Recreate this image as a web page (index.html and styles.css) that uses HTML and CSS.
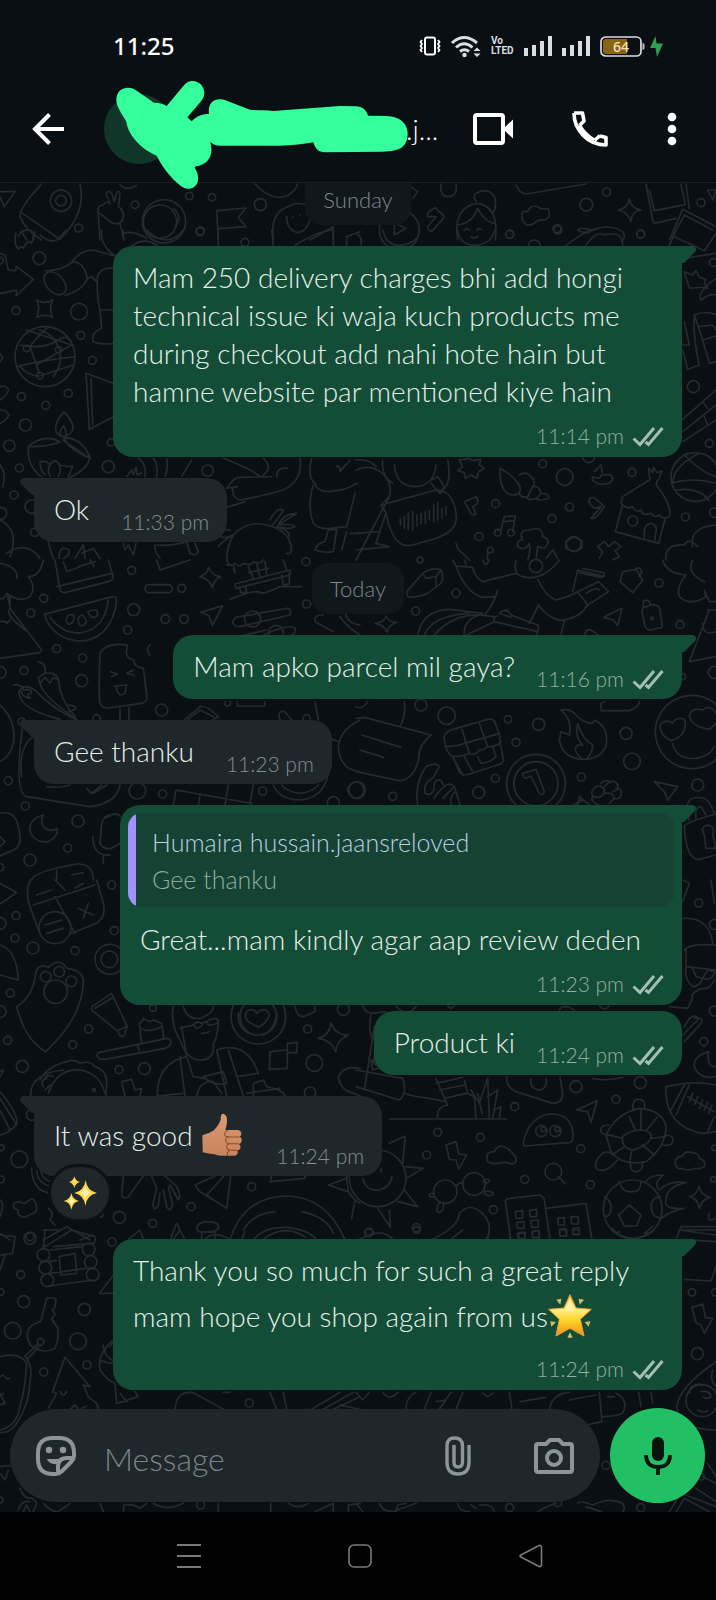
FILE: index.html
```html
<!DOCTYPE html>
<html lang="en">
<head>
<meta charset="utf-8">
<meta name="viewport" content="width=device-width, initial-scale=1">
<title>Chat</title>
<link rel="stylesheet" href="styles.css">
</head>
<body>
<svg class="defs" aria-hidden="true">
  <symbol id="ticks" viewBox="0 0 32 21"><path d="M1.500 12.500L8 18.500L22 2M13.500 16L16.500 18.500L30.500 2" fill="none" stroke="currentColor" stroke-width="3"/></symbol>
  <symbol id="signal" viewBox="0 0 28 20"><path d="M0 12h4v8H0zM8 9h4v11H8zM16 5h4v15h-4zM24 0h4v20h-4z" fill="#dcdde0"/></symbol>
</svg>

<header class="top">
  <div class="status">
    <span class="clock">11:25</span>
    <div class="status-icons">
      <svg width="22" height="20" viewBox="0 0 22 20" fill="none" stroke="#fff"><rect x="6" y="1.500" width="10" height="17" rx="2" stroke-width="2"/><path d="M3 4l-1.500 2L3 8l-1.500 2L3 12l-1.500 2L3 16M19 4l1.500 2L19 8l1.500 2-1.500 2 1.500 2-1.500 2" stroke-width="1.800"/></svg>
      <svg width="30" height="23" viewBox="0 0 30 23"><path d="M1 8Q13 -3 26 8M5 12.500Q13 5 21.500 12.500M9 16.500Q13.500 13 18 16.500" fill="none" stroke="#dcdde0" stroke-width="3"/><circle cx="13.500" cy="20" r="2.200" fill="#dcdde0"/><path d="M22.500 16l3.500-3.500 3.500 3.500zM22.500 18.500h7L26 22z" fill="#dcdde0"/></svg>
      <span class="volte"><span>Vo</span><span>LTED</span></span>
      <svg width="28" height="20"><use href="#signal"/></svg>
      <svg width="28" height="20"><use href="#signal"/></svg>
      <span class="power">
        <svg width="45" height="21" viewBox="0 0 45 21"><rect x="1" y="1" width="40" height="19" rx="4.500" fill="none" stroke="#dcdde0" stroke-width="1.700"/><path d="M6 3h21v15H6q-3 0-3-3V6q0-3 3-3z" fill="#8a6511"/><path d="M42.500 7q2 0 2 2v3q0 2-2 2z" fill="#b9bbbe"/><text class="charge" x="21" y="15.500" text-anchor="middle">64</text></svg>
        <svg width="13" height="21" viewBox="0 0 13 21"><path d="M5.500 0L0 12h5.500L7 21L13 7.500H6.500z" fill="#2e9e4f"/></svg>
      </span>
    </div>
  </div>
  <div class="appbar">
    <button class="icon-btn" aria-label="Back"><svg width="32" height="32" viewBox="0 0 32 32" fill="none" stroke="#fff" stroke-width="4"><path d="M32 16H3M17.500 1.500L3 16l14.500 14.500"/></svg></button>
    <span class="avatar"></span>
    <h1 class="contact">.j...</h1>
    <div class="actions">
      <button class="icon-btn" aria-label="Video call"><svg width="40" height="32" viewBox="0 0 40 32"><rect x="2" y="2" width="28" height="28" rx="2" fill="none" stroke="#fff" stroke-width="4"/><path d="M30 16L40 6.500V25.500z" fill="#fff"/></svg></button>
      <button class="icon-btn" aria-label="Voice call"><svg width="36" height="36" viewBox="0 0 36 36" fill="none" stroke="#fff" stroke-width="3.600" stroke-linejoin="round"><path d="M2 2h8.500l1.500 8-4.500 4.500M28 25l6 1.500V34C16 34 2 19 2 2M28 24.500l-5.500 5"/><path d="M7.500 14.500Q13 24 22 29"/></svg></button>
      <button class="icon-btn" aria-label="More options"><svg width="10" height="34" viewBox="0 0 10 34" fill="#fff"><circle cx="5" cy="5" r="4.300"/><circle cx="5" cy="17" r="4.300"/><circle cx="5" cy="29" r="4.300"/></svg></button>
    </div>
    <svg class="scribble" width="410" height="190" viewBox="0 0 1230 570" aria-hidden="true"><path fill="#34ff9c" d="M349 300C349 275 365 263 385 263C395 263 402 266 410 272L462 308C480 308 492 312 500 318L550 258C560 246 568 243 578 243C598 243 613 260 613 279C613 290 608 298 602 305L562 352L575 364C590 348 605 342 627 342C624 320 632 298 660 298C668 298 675 300 682 303L750 329C775 331 800 330 820 333L1020 318L1068 319C1090 320 1100 333 1104 347L1158 348C1205 349 1223 375 1223 400C1223 440 1200 455 1148 455L975 457C955 457 945 445 940 427C900 434 870 436 840 437H660C648 437 640 433 630 426C638 450 635 470 620 485C610 494 600 496 588 499L584 503C595 520 597 535 592 548C585 565 565 570 553 564C530 552 490 510 470 467C430 450 385 410 379 365C365 340 349 320 349 300Z"/></svg>
  </div>
</header>

<main class="chat">
  <svg class="wallpaper" viewBox="0 183 716 1329" preserveAspectRatio="xMidYMin slice" aria-hidden="true">
    <g transform="scale(.33333)">
      <path d="M0 575L45 575L12 620L0 590M125 552Q60 620 60 650Q75 690 125 720M60 635L180 718Q260 640 240 552M55 710Q60 690 85 690Q105 690 100 720M68 700L80 720M300 720L295 640Q290 615 310 615Q320 600 330 612L318 582Q325 568 335 580L343 605L350 578Q360 568 360 585L355 620Q375 630 368 660Q355 680 330 665L300 640M360 670L372 720M370 700Q400 690 440 715M520 625Q550 650 525 680M360 555Q380 575 410 556M655 720L650 632L738 624L715 652L738 680L656 686M820 720Q810 640 860 622Q900 600 925 620M860 650Q860 690 895 698Q925 690 930 655M878 650v2M900 645v2M765 552Q800 590 835 592Q880 590 892 552M930 720L1000 680V720"/>
      <circle cx="183" cy="602" r="32"/><circle cx="183" cy="602" r="16"/><circle cx="236" cy="684" r="12"/><circle cx="405" cy="614" r="11"/><circle cx="568" cy="588" r="11"/><circle cx="636" cy="592" r="11"/><circle cx="601" cy="693" r="12"/><circle cx="781" cy="614" r="18"/><circle cx="492" cy="664" r="65"/><circle cx="480" cy="665" r="50"/>
    </g>
    <g transform="translate(356 0) scale(.33333)">
      <path d="M165 560L185 575L170 595M255 552Q250 590 278 590Q305 588 300 552M225 630Q210 640 215 650L240 650L215 680Q215 695 230 692L262 655Q268 645 255 640L238 623ZM305 720Q290 620 365 610Q430 620 418 720M305 675Q350 670 365 625Q385 665 415 670M360 605Q350 585 360 580Q395 560 415 590Q425 620 410 640M325 690Q332 682 340 690M362 690Q370 682 378 690M500 660Q490 630 515 635Q525 610 548 622Q555 630 575 625Q590 650 565 660Q545 658 535 670Q510 685 500 660ZM480 555Q490 580 510 582L690 552M820 597Q825 625 855 630Q825 635 825 665Q815 635 787 630Q815 625 820 597M870 552L890 660Q892 672 905 668L960 655M880 570L895 632L988 614L975 552M990 552L1000 625M940 720L980 628L1080 680M955 700L985 645L1070 690M1055 570H1080L1070 600ZM115 670V705L150 685ZM665 690Q670 680 710 690Q760 670 800 695Q810 710 800 720M665 690Q690 705 710 692"/>
      <circle cx="691" cy="614" r="19"/><circle cx="752" cy="576" r="12"/><circle cx="603" cy="686" r="12"/><circle cx="461" cy="703" r="12"/><circle cx="854" cy="703" r="12"/><circle cx="1035" cy="608" r="12"/><circle cx="130" cy="690" r="60"/>
    </g>
    <g transform="translate(0 230) scale(.33333)">
      <path d="M48 10Q40 40 55 58Q65 45 70 55Q85 25 95 40L105 5M120 15Q150 40 170 30L200 0M305 0Q300 50 350 80M370 25V0M0 70L15 75L25 120L48 122V108L100 148L48 198L50 180L0 190M215 97Q240 60 280 60L345 78M215 97Q250 90 262 145L275 140L290 155M215 97Q190 120 135 123M262 145Q250 180 195 197M110 210Q135 225 158 210Q145 240 158 262Q135 250 110 262Q122 235 110 210M345 115Q300 110 292 140Q290 200 300 240L305 295Q270 310 280 335Q300 345 345 340M300 240H345M0 470Q20 465 26 480Q25 490 0 510M0 540Q22 540 26 555Q22 570 0 580M258 430L345 462M258 430L268 598L345 558M273 445L278 585M0 370L8 385L0 395M192 545Q215 570 220 590Q215 618 190 620Q165 615 167 590Q170 570 192 545M190 588Q175 605 183 618M190 588Q202 605 198 618M85 650Q130 610 180 635Q150 650 85 650M85 650Q80 710 125 740M192 625Q210 660 270 685Q260 720 210 742M188 630L270 685M192 623Q250 625 270 685M120 695Q140 690 150 705Q165 680 178 705Q200 710 218 710L205 740M120 695Q120 720 135 735M150 705Q140 720 150 738M178 705Q185 725 175 738M0 705Q20 730 8 770M50 290M60 345Q130 360 175 330Q200 310 215 340M50 410Q130 390 225 380M88 350Q140 290 150 290M90 350L118 430M118 300Q160 310 178 358Q190 400 160 440M60 410Q90 440 118 438L220 405M80 300L215 345M108 405L215 345M380 740L395 720L400 735L408 712L412 735L425 728M415 685Q440 700 435 740M460 685Q475 700 470 740M500 685Q505 720 495 740M545 740L575 690M670 685Q760 720 780 740M790 685Q820 710 790 735M830 740Q830 710 862 715M900 685Q910 750 850 780Q780 800 720 810M720 810Q695 800 700 785Q690 775 712 770L680 775Q700 745 715 742L815 740M680 832L735 815M835 885Q850 850 890 850L835 885Q880 880 885 890Q870 900 830 890Q870 900 868 920M815 888Q840 860 850 840Q830 830 810 870M680 990Q680 950 700 915Q740 870 800 885Q870 900 875 960Q870 975 860 970M700 915Q670 930 655 950M690 900Q660 895 655 915Q670 930 700 915M935 685Q920 740 945 760Q950 785 990 785Q1040 780 1070 760M940 765Q920 830 940 880Q960 900 990 895L1040 890L1065 790M985 900L1010 898L1000 965Q970 970 945 960Q950 940 975 935ZM1040 905L1025 960M1050 910H1080M1010 710Q1020 700 1020 725L1050 690M0 870Q60 900 30 980M20 970Q80 930 120 985M145 935Q150 960 160 985M370 940L375 960L385 945L400 975L408 940M465 945Q460 960 480 985M470 945Q510 950 560 935L570 970Q590 980 595 965L585 940"/>
      <circle cx="118" cy="85" r="19"/><circle cx="48" cy="242" r="12"/><circle cx="237" cy="245" r="25"/><circle cx="242" cy="316" r="12"/><circle cx="277" cy="391" r="12"/><circle cx="135" cy="380" r="90"/><circle cx="80" cy="355" r="10"/><circle cx="176" cy="359" r="10"/><circle cx="120" cy="437" r="10"/><circle cx="64" cy="500" r="12"/><circle cx="205" cy="490" r="12"/><circle cx="137" cy="526" r="12"/><circle cx="76" cy="585" r="18"/><circle cx="28" cy="647" r="17"/><circle cx="58" cy="714" r="12"/><circle cx="325" cy="710" r="18"/><circle cx="333" cy="637" r="11"/><circle cx="42" cy="795" r="12"/><circle cx="2" cy="850" r="18"/><circle cx="95" cy="830" r="20"/><circle cx="104" cy="907" r="12"/><circle cx="623" cy="722" r="17"/><circle cx="600" cy="5" r="12"/><circle cx="735" cy="37" r="12"/><circle cx="0" cy="92" r="10"/><ellipse cx="165" cy="160" rx="40" ry="26" transform="rotate(48 165 160)"/>
      <path d="M395 48Q430 20 470 45M440 0Q500 60 550 0M655 0V46M815 0L820 46M885 46Q960 0 1000 0V46M1040 46V20L1080 5M178 985Q175 960 190 955Q215 955 205 975L190 985M225 985L250 945L255 985M245 970L280 955L300 985"/>
    </g>
    <g transform="translate(356 230) scale(.33333)">
      <path d="M0 10Q20 20 15 45M80 0Q90 46 130 46Q190 40 190 0M305 0Q310 46 360 46Q410 40 415 0M345 20Q355 30 365 18M630 46Q680 10 700 0M690 46Q720 0 745 15Q800 0 800 46M940 46L960 0M955 20L1045 62L1080 10M985 85L1080 70M985 125L1000 175Q1040 170 1055 175Q1040 160 1050 148L1030 142L1020 122L1010 135ZM1035 210Q1020 190 1080 145M1035 210Q1060 190 1080 195M985 275L1000 345L980 345M1015 255Q1050 240 1080 255M1015 255L1040 330L1080 318M980 360L995 418L1030 405Q1010 320 1015 255M1040 330L1060 400L1080 395M1025 290L1070 285L1080 300M980 568L1080 480M980 605L1080 525M980 635L1080 570M1040 515L1055 535M1045 560L1055 585M115 705Q120 770 180 770Q235 765 240 705M80 690Q75 740 110 760M275 690Q290 770 250 785M225 760L250 790Q265 785 262 765L245 740M225 750L245 740M0 720Q40 700 80 730Q110 760 100 800L0 990M100 800L75 825L90 848Q110 960 170 945L240 925Q310 900 300 850Q290 780 240 780L75 825M90 848L60 940L100 950L0 960M0 910L65 905M133 865V885M145 860V895M157 850V900M170 845V902M183 855V888M195 850V882M208 845V880M220 840V870M233 825V875M245 818V870M258 835V865M270 830V855M310 690L320 710L305 722L325 728L328 745L345 735L362 745L368 725L385 715L370 705L375 688L350 692L340 685ZM432 715Q430 790 470 795Q500 795 490 765Q470 735 432 715ZM490 735Q510 720 530 745Q540 760 530 770Q550 765 555 790Q580 790 578 805Q550 815 540 805Q520 815 510 800Q495 805 490 790M530 770L515 800M555 790L540 808M325 815L360 800Q375 820 350 830L360 850Q350 860 345 850ZM415 910Q415 895 435 900L445 860L478 858L470 905M440 875L475 872M735 705L740 735Q770 730 770 745Q770 765 730 762Q705 755 710 740Q735 750 735 735M715 725L735 705M800 800L880 750Q885 745 880 740L878 715L890 728L893 712L903 728L918 722L910 745Q895 760 905 770Q950 830 940 860Q920 870 910 855Q895 865 885 850Q860 860 855 840Q840 850 830 830Q810 840 795 820ZM798 830L778 905L908 940L928 865M865 925V900Q870 880 885 880Q905 885 900 905L895 935M700 820Q695 800 715 803L745 830Q720 870 705 865L735 830L715 835ZM485 950Q480 930 500 930Q485 900 520 900Q560 885 560 920Q590 930 565 955L545 950L540 985M485 950Q510 965 520 940Q525 965 515 990M570 985L590 960L605 985M655 920L678 932V955L655 965L630 955V932ZM725 950L745 935L758 950L775 935L795 950L778 962L790 980L770 990M725 950L740 965L730 985M930 990Q925 940 985 945Q1000 920 1025 950M1010 950Q1000 890 1080 885M1030 670Q950 710 950 760M985 675Q1040 730 1080 740M945 760Q1010 740 1080 760M960 780Q1030 770 1060 812M300 940Q305 960 320 970L340 990M395 990V955Q410 945 412 965L395 970M0 690Q40 685 60 710"/>
      <circle cx="461" cy="13" r="12"/><circle cx="854" cy="12" r="12"/><circle cx="605" cy="0" r="12"/><circle cx="535" cy="48" r="18"/><circle cx="1072" cy="98" r="12"/><circle cx="1012" cy="470" r="18"/><circle cx="1060" cy="640" r="12"/><circle cx="560" cy="701" r="12"/><circle cx="828" cy="727" r="12"/><circle cx="626" cy="741" r="25"/><circle cx="419" cy="821" r="12"/><circle cx="641" cy="831" r="12"/><circle cx="588" cy="866" r="12"/><circle cx="369" cy="920" r="12"/><circle cx="988" cy="861" r="12"/><circle cx="830" cy="873" r="15"/><circle cx="653" cy="942" r="22"/><circle cx="1018" cy="741" r="73"/><circle cx="1075" cy="848" r="14"/><circle cx="425" cy="908" r="10"/><circle cx="465" cy="908" r="10"/><circle cx="698" cy="680" r="18"/>
    </g>
    <g transform="translate(0 560) scale(.33333)">
      <path d="M165 0L180 90Q185 100 198 97L325 65Q342 60 338 45L325 0M170 80L335 40M190 5L200 35L240 20M235 20L285 5M270 0L282 18M130 0Q120 50 85 50Q110 80 90 110Q60 130 20 100Q10 120 0 115M50 55Q55 20 0 10M22 100L30 145L125 270L120 278L0 295M30 110V145Q20 160 40 180L75 210M0 185Q15 180 20 190L30 180M132 163L338 110Q355 105 345 150Q320 240 240 243Q160 240 132 163ZM150 172Q190 225 245 218Q315 205 325 120M200 185Q195 160 222 165Q225 190 205 193ZM240 195Q225 170 248 165Q270 190 245 198ZM265 160Q260 150 290 150Q300 175 275 172ZM470 0L480 30L570 0M600 50Q625 40 625 22Q640 50 662 50Q640 60 638 83Q625 55 600 50M680 15L700 15L705 40M680 0Q690 25 705 10Q720 25 730 10Q750 20 760 5Q780 15 790 0M705 72L870 30V45L708 85ZM718 80L722 98H740L736 78M845 45L850 75L868 72V40M745 20L760 55M770 10L780 52M795 5L800 48M745 38L805 25M850 0L860 30M690 118L740 100Q770 90 790 100Q820 90 840 80H905M602 157L668 137L637 197L627 167ZM300 280Q295 410 300 430Q305 445 325 444L425 430Q445 425 440 405L430 325Q400 320 402 300Q370 295 383 256Q320 245 300 280M332 335L352 342L335 350M400 330L380 340L402 345M342 378L382 375M350 378Q350 405 365 405Q380 400 378 378M360 445V480M387 442V480M115 305Q140 310 135 340M115 355Q130 335 155 340Q175 345 175 360L160 352L150 370L135 352L120 370ZM120 370Q130 410 230 478M175 360Q180 420 225 470M200 435Q230 435 225 448L205 455M40 375Q60 372 70 385M60 410Q50 385 80 380Q100 385 110 395Q150 440 225 478M60 410Q70 450 180 478M70 390Q95 385 95 400Q75 400 90 415Q65 410 65 395M0 435Q50 480 40 550Q30 590 0 605M70 480Q40 700 80 710L270 740Q350 730 360 675M100 530Q55 560 65 650M140 680Q180 685 210 675M260 685L275 700L305 675M280 700L320 675M555 478L600 440Q620 435 655 470L640 478M565 478L600 450L640 470M675 425V435Q690 445 692 425M712 425V438H795V425M840 480Q830 450 855 455L875 480M945 425L955 480M1080 480Q1020 510 1015 560Q1020 630 1080 635M985 535L1018 545M520 735L528 690L755 730L750 740M600 705L595 735M685 675L675 735M760 675L750 730M820 675Q840 720 900 720Q970 715 985 640M845 675Q860 695 900 700Q940 695 955 675M0 760Q45 750 55 800Q70 860 40 870L0 888M0 830L15 845L0 860M130 765Q80 780 92 820Q110 850 145 845Q175 830 172 805Q150 820 130 800Q120 785 130 765M315 770Q350 755 362 770M300 850L305 790Q310 770 330 768M300 850Q310 870 335 865L360 850M278 830Q280 890 330 885M310 888V910M95 960Q100 935 230 912Q280 910 280 960M170 930V960M215 945L250 938M1035 155Q1040 190 1080 195M945 185L1000 215M945 185Q940 165 970 165M1020 170Q1040 200 1080 225M720 170L860 145Q875 145 870 165L720 200Q695 200 700 180Q705 170 720 170M790 225Q870 190 885 205Q890 220 870 228M720 228L800 210M450 255Q435 265 450 285"/>
      <rect x="435" y="74" width="82" height="24" rx="12"/><circle cx="545" cy="85" r="12"/><circle cx="395" cy="31" r="12"/><circle cx="131" cy="115" r="12"/><circle cx="92" cy="159" r="12"/><circle cx="401" cy="149" r="18"/><circle cx="496" cy="177" r="13"/><circle cx="552" cy="177" r="13"/><circle cx="383" cy="210" r="12"/><circle cx="170" cy="266" r="12"/><circle cx="248" cy="294" r="12"/><circle cx="72" cy="332" r="12"/><circle cx="0" cy="337" r="18"/><circle cx="245" cy="362" r="18"/><circle cx="485" cy="450" r="18"/><circle cx="290" cy="475" r="11"/><circle cx="65" cy="485" r="11"/><circle cx="25" cy="662" r="12"/><circle cx="76" cy="738" r="12"/><circle cx="234" cy="783" r="18"/><circle cx="203" cy="864" r="12"/><circle cx="90" cy="900" r="18"/><circle cx="0" cy="922" r="11"/><circle cx="412" cy="692" r="25"/><circle cx="488" cy="702" r="12"/><circle cx="788" cy="693" r="12"/><circle cx="1000" cy="728" r="18"/><circle cx="1068" cy="690" r="24"/><circle cx="758" cy="177" r="24"/><circle cx="828" cy="218" r="22"/><circle cx="920" cy="132" r="12"/><circle cx="918" cy="5" r="12"/><circle cx="920" cy="475" r="11"/>
    </g>
    <g transform="translate(356 560) scale(.33333)">
      <path d="M290 0L300 18L350 22Q355 50 380 65L480 40M300 18Q330 100 380 112L415 110M325 0L330 15M380 0Q390 25 400 0M425 90Q415 130 388 162M480 0Q470 45 500 50Q560 65 610 0M545 58Q570 110 600 120Q640 110 665 95L728 65L758 95L695 135L665 95M620 180Q670 175 695 135M690 100Q720 80 730 90M665 30L745 50M680 25L742 38Q750 50 735 52L670 38M665 30L650 95M800 35L840 28L860 60L830 98L792 65ZM835 30Q850 15 858 35L848 50M743 172L798 145L785 197L772 180ZM860 145L890 133Q910 135 912 150L918 195Q920 205 905 205L885 210Q870 210 866 195L858 155ZM862 140V125Q865 115 880 125L883 135M152 95L200 40Q230 20 255 30Q265 50 255 70L215 100Q180 115 155 110ZM200 40L210 55L240 50L240 80M240 50L255 30M58 190Q88 185 90 168Q98 188 122 187Q98 195 93 217Q85 195 58 190M185 225Q200 150 280 148L380 160M205 225Q230 165 340 160M325 228Q320 180 370 165L415 170M235 225Q290 160 380 165M430 160Q450 140 465 165L545 195Q550 205 545 215L415 185Q410 170 425 168M430 160L465 172M445 150H455M415 185L325 228M545 215L540 228M520 190L548 135Q580 180 625 182L615 225M920 0Q930 40 990 45Q960 80 970 110Q1000 140 1050 110L1045 90M1010 0Q990 40 1045 65M1045 90L1060 125H1080M1055 150H1080M1060 150L1000 305L1080 290M1040 190Q1040 230 1080 215M685 228Q690 205 705 210L730 228M0 440Q20 450 35 425M145 425Q150 460 135 495M0 475L25 472L225 525Q185 560 190 590Q175 660 130 662L0 635M18 525L135 562M12 570L82 592M265 540Q260 520 285 510L395 478Q415 475 418 490L432 530Q430 550 435 560L442 600Q440 612 425 615L330 645Q315 645 310 635L290 590Q270 580 265 540ZM318 508L340 580Q320 590 290 590M370 490L395 560Q425 560 435 545M268 560Q300 560 325 550L432 520M340 580Q355 590 370 570Q385 570 395 560M295 600L320 645M325 590L350 635M365 590L375 610Q400 610 420 590L410 560M745 425L735 430V452H820Q850 440 850 425M615 450Q640 445 655 460Q680 490 710 490L715 480Q760 500 750 560Q730 600 680 598Q620 595 610 540L615 515L640 525Q650 480 615 450M680 598Q645 570 665 555L680 555Q655 530 665 490Q680 540 710 555Q710 580 690 598M985 510Q995 475 975 475Q955 475 950 490Q930 475 912 495Q910 525 945 542Q975 535 985 510M1080 460Q1060 430 1040 450Q1010 440 1000 465Q1005 500 1060 508L1080 490M950 550Q960 600 1020 595Q1060 590 1075 560M185 735Q175 670 210 620Q240 605 250 620L230 655M230 655Q200 670 208 700Q225 710 232 690M235 690Q230 655 255 660L265 680Q240 700 235 715M265 680Q280 665 295 680L260 715M295 680L300 695Q280 705 285 735M300 695L312 735M500 640L540 628L565 695Q560 710 550 700L525 648L508 655Q500 650 500 640M480 700Q460 650 500 620L515 608M895 665L965 680L935 720L925 695ZM670 715L665 735M650 735L680 720L670 710L700 735M710 690Q730 665 745 690Q745 710 725 712Q700 710 710 690M745 680Q770 650 785 675Q790 690 770 695M735 670Q750 655 765 668M745 700Q770 695 775 715L760 730M710 710Q700 725 730 735M780 685Q800 685 795 705Q790 720 775 715M1000 780Q975 700 1045 715Q1060 720 1075 760M1020 775Q1015 740 1035 740L1050 765M985 800Q980 790 1080 762M985 800Q990 900 1030 898L1080 885M1050 865L1045 825Q1030 800 1055 795Q1080 800 1070 825L1080 865Z"/>
      <circle cx="540" cy="18" r="20"/><circle cx="300" cy="99" r="12"/><circle cx="179" cy="153" r="12"/><circle cx="909" cy="69" r="12"/><circle cx="972" cy="194" r="12"/><circle cx="888" cy="175" r="4"/><circle cx="272" cy="467" r="26"/><circle cx="195" cy="435" r="18"/><circle cx="456" cy="478" r="11"/><circle cx="548" cy="493" r="18"/><circle cx="480" cy="547" r="12"/><circle cx="810" cy="520" r="18"/><circle cx="828" cy="604" r="25"/><circle cx="418" cy="655" r="12"/><circle cx="676" cy="651" r="12"/><circle cx="368" cy="697" r="18"/><circle cx="110" cy="709" r="12"/><circle cx="3" cy="690" r="25"/><circle cx="1025" cy="675" r="18"/><circle cx="540" cy="671" r="88"/><circle cx="540" cy="671" r="66"/><circle cx="1008" cy="516" r="110"/><circle cx="1075" cy="337" r="18"/><circle cx="980" cy="350" r="9"/><circle cx="192" cy="0" r="9"/>
    </g>
    <g transform="translate(0 880) scale(.33333)">
      <path d="M0 10L50 38L0 72M90 0Q75 40 90 80L115 150M215 160L290 130Q320 110 310 70L290 0M100 75L285 15M165 50L225 160M195 30L165 0M110 45L155 30M225 25L250 10M235 85L280 105M265 70L250 115M135 135L185 120M140 160L190 145M0 195Q50 210 55 300L0 285M50 380Q100 350 108 275Q115 250 145 262Q180 230 200 265Q245 270 250 300Q250 410 137 515Q75 480 50 380M275 380L335 340L382 440L375 455Q380 465 365 470Q355 465 355 455L275 390ZM285 385L340 352M355 450L380 440M290 525Q295 515 310 515L500 475Q515 475 512 490Q510 500 495 505L315 538Q295 540 290 525M412 495L418 512M425 490L418 430Q430 425 430 415Q450 430 460 420L485 430L492 475M425 445Q440 460 485 440M520 380Q510 430 540 480Q560 540 600 540Q635 540 640 510V490Q650 480 655 430M550 380Q560 420 600 415Q640 400 640 380M580 435Q590 420 605 430Q610 440 590 445ZM620 425Q640 410 655 420Q655 435 625 435ZM540 445L580 435M605 430L620 425M605 460Q620 460 628 455M472 648Q470 550 560 530L545 440M560 530L580 590L615 595M650 510L680 648M650 510Q740 480 775 580L710 590M685 510L730 648M540 530L555 648M475 648L550 640M610 590L670 575L680 610Q640 620 610 590M590 648Q600 600 640 605L665 640M760 648V610L790 600L800 620Q850 630 855 648M740 640L840 625M770 400Q760 380 740 395Q730 410 745 425L775 442Q800 430 808 405Q800 385 785 390Q775 392 770 400M715 400Q710 440 745 460M830 400Q825 450 790 465M885 380Q890 410 910 410L945 395V380M955 475Q990 465 993 428Q1005 465 1045 465Q1010 480 1007 515Q995 480 955 475M810 515L862 510V565L808 568ZM862 490L892 487L890 518H862ZM1080 565Q1030 555 1015 590Q1020 630 1060 640L1080 648M92 648Q90 580 190 570M120 600Q140 560 200 545Q220 535 240 550Q270 540 285 560Q320 570 320 610L318 648M145 640Q170 565 240 570Q300 580 315 640M130 600Q140 580 160 590M130 620Q120 600 140 595M135 630L150 615M365 605L395 598L405 630L425 625L420 648M365 605L375 648M0 575Q20 560 0 590M0 635Q55 700 50 730Q30 760 0 765M0 655L50 735M0 690L30 750M95 865Q95 930 150 940M110 870Q110 910 155 920M120 865Q125 900 155 905M55 965L75 970L95 955Q115 970 108 995L75 1012Q50 1010 55 990Q35 985 42 970ZM145 985Q165 1000 150 1020L165 1035M300 1010Q310 1015 308 1000M0 1010Q15 970 0 960M370 888L365 945Q370 960 385 950L430 888M455 888L470 925L458 975Q465 995 475 975L480 940M490 930L500 980Q510 1000 518 975L505 920M510 915L535 960Q545 945 530 920L495 888M645 888L585 915L600 935L680 985L692 888M670 890L620 945L640 960M815 888L810 905L915 895V888M985 915L1040 895L1045 935ZM1040 895V888M1055 1015L1065 960M1045 935Q1060 960 1080 970M985 915L1045 935M690 1080Q730 950 860 948Q980 950 1035 1080M760 1080Q790 1040 860 1042Q930 1050 950 1080M730 1050Q760 1000 825 995M905 995Q980 1010 1000 1060M590 1045Q595 1025 620 1025Q660 1025 655 1045Q640 1060 620 1055Q590 1060 590 1045M605 1060V1080M645 1058V1080M510 1080L530 1030L555 1080M130 1080L200 1040L270 1080M0 1060L30 1080M130 1050H175M240 1080L280 1065"/>
      <circle cx="165" cy="143" r="48"/><circle cx="178" cy="275" r="16"/><circle cx="137" cy="290" r="16"/><circle cx="214" cy="304" r="16"/><circle cx="167" cy="335" r="35"/><circle cx="330" cy="238" r="45"/><circle cx="328" cy="238" r="25"/><circle cx="48" cy="107" r="12"/><circle cx="45" cy="174" r="12"/><circle cx="99" cy="204" r="18"/><circle cx="335" cy="15" r="12"/><circle cx="343" cy="152" r="12"/><circle cx="225" cy="212" r="12"/><circle cx="0" cy="130" r="18"/><circle cx="31" cy="339" r="12"/><circle cx="0" cy="395" r="18"/><circle cx="23" cy="481" r="12"/><circle cx="218" cy="494" r="12"/><circle cx="266" cy="447" r="12"/><circle cx="67" cy="559" r="18"/><circle cx="357" cy="569" r="12"/><circle cx="433" cy="566" r="18"/><circle cx="459" cy="384" r="10"/><circle cx="775" cy="410" r="82"/><circle cx="775" cy="410" r="55"/><circle cx="923" cy="447" r="12"/><circle cx="943" cy="549" r="25"/><circle cx="1030" cy="388" r="18"/><circle cx="930" cy="638" r="17"/><circle cx="58" cy="838" r="25"/><circle cx="95" cy="705" r="16"/><circle cx="3" cy="803" r="9"/><circle cx="3" cy="898" r="10"/><circle cx="755" cy="920" r="12"/><circle cx="573" cy="980" r="12"/><circle cx="458" cy="1030" r="12"/><circle cx="358" cy="1012" r="18"/><circle cx="282" cy="630" r="4"/><circle cx="90" cy="1070" r="12"/>
    </g>
    <g transform="translate(356 880) scale(.33333)">
      <path d="M980 0L1000 10L980 65M1065 0L1075 70M980 115Q1060 110 1070 190M985 210Q1000 190 1080 195M990 205V260Q985 300 1010 320Q1030 320 1040 295M1040 295Q1070 305 1075 275L1055 270L1040 295L1020 290L1010 265M990 260L1080 270M1075 300Q1060 330 1040 325Q1000 340 1010 355L995 385L940 380M985 440L1000 415Q1025 400 1025 420L980 465M985 485L1035 430Q1045 410 1015 415M1058 515Q1010 530 1015 560Q1030 600 1080 590M1058 515Q1050 560 1080 560M20 378Q30 400 50 400L90 395M120 378Q150 415 180 380M275 378L285 385L295 378M610 390Q620 370 655 390M730 378Q745 395 760 378M45 400Q35 470 55 480L80 490M55 440L25 630M50 540Q50 555 80 560L50 570L45 540M0 570L140 595Q155 640 130 660L0 620M80 490Q40 540 60 555M145 640Q170 650 220 655L270 665L240 595M240 610L320 592M250 630L325 615M265 655L330 640M325 600L335 640L355 650L360 715M275 675Q240 680 245 715M270 665L275 675M345 630L370 670L395 595L400 715M365 640L378 700M395 650L425 630L410 715M415 690L435 680L430 715M100 717H452M452 590Q450 620 480 635L590 670Q620 670 620 640L612 590M525 595Q520 630 555 630Q575 620 570 595M710 595Q750 605 800 592M100 790L148 768L140 850M148 860L202 865L152 895M145 930L185 980L125 965M100 990L103 1042L65 985M20 895Q30 935 70 930Q105 920 108 890M75 875V865M270 795L300 785L308 822L332 825L308 868L300 840L280 838ZM395 845Q385 815 415 815Q430 785 460 810Q470 820 475 825Q490 850 465 852Q450 845 435 848Q410 855 395 845ZM505 798Q495 790 520 740Q550 700 590 702Q640 705 650 750Q655 785 640 788ZM662 690L723 662L705 728L695 695ZM930 620Q1010 600 1080 615M930 620Q925 740 1040 760L1080 755M960 705L1000 615M945 690L985 615M995 650L1075 695M1010 640L1000 665M1025 650L1015 675M1040 660L1030 685M1055 668L1045 690M1068 675L1058 700M1055 755L1075 710M750 765Q780 700 850 685Q920 690 930 740Q930 800 870 845Q800 860 765 815ZM800 770Q820 750 860 750Q890 755 885 775Q870 800 830 810Q795 805 800 770M758 765L800 775M820 710L838 750M855 685V750M905 710L870 752M930 770L885 775M895 825L860 795M820 850L828 810M775 820L805 800M830 685Q830 655 850 658Q870 660 865 685M760 735Q730 735 735 755Q740 765 755 765M925 765Q955 765 950 785Q945 800 920 795M770 825Q760 810 740 820Q715 840 720 865Q740 880 765 860L785 840M825 850Q820 875 840 875Q860 875 860 850M958 850Q955 830 980 828Q985 810 1010 818Q1030 820 1030 835Q1050 840 1045 860Q1030 870 1015 865Q995 875 980 865Q960 870 958 850M607 890L628 912M300 920Q310 905 322 910M380 905Q400 890 400 905L385 912M385 935Q405 930 412 942Q400 955 385 940M235 940Q215 940 222 950L238 952M250 968Q235 995 250 998Q265 990 262 970M225 1080Q310 1040 310 1000Q340 965 380 1000Q415 1040 390 1080M448 965Q450 955 460 955L550 945Q562 950 565 960L582 1080M448 965L465 1080M570 985L690 970L708 1080M478 995L500 992V1015H480ZM520 992L542 988V1010H522ZM482 1028L504 1025V1045H484ZM525 1022L547 1020V1042H527ZM485 1060L507 1057V1078H487ZM528 1055L550 1052V1073H530ZM605 1015L625 1013V1035H607ZM645 1010L667 1010V1032H647ZM610 1048L630 1046V1068H612ZM650 1045L670 1043V1064H652ZM820 975L855 1005L842 1038H805L788 1005ZM790 905Q800 940 830 935Q855 935 855 905M745 950Q765 960 765 980Q765 1010 748 1010M912 950Q880 955 887 990Q890 1010 912 1015M770 1045L780 1060L790 1055M890 1040L865 1060L880 1060M870 905Q880 885 922 885Q890 910 910 930Q940 900 990 908Q930 920 930 960Q920 990 985 985Q950 990 915 1015M1000 950Q1025 945 1028 918Q1035 945 1062 952Q1035 960 1030 985Q1025 955 1000 950M960 1080L975 1040H1080M970 1050L1080 1065M1060 1000Q1050 1030 1080 1015"/>
      <circle cx="1028" cy="69" r="12"/><circle cx="1075" cy="133" r="15"/><circle cx="1043" cy="485" r="12"/><circle cx="660" cy="620" r="18"/><circle cx="853" cy="608" r="18"/><circle cx="780" cy="658" r="12"/><circle cx="476" cy="680" r="12"/><circle cx="245" cy="757" r="12"/><circle cx="373" cy="772" r="12"/><circle cx="212" cy="825" r="12"/><circle cx="674" cy="806" r="12"/><circle cx="506" cy="898" r="12"/><circle cx="703" cy="914" r="12"/><circle cx="412" cy="989" r="12"/><circle cx="181" cy="1043" r="12"/><circle cx="40" cy="1057" r="12"/><circle cx="592" cy="875" r="25"/><circle cx="556" cy="753" r="17"/><circle cx="598" cy="753" r="17"/><circle cx="562" cy="748" r="7"/><circle cx="604" cy="748" r="7"/><circle cx="268" cy="935" r="35"/><circle cx="354" cy="912" r="34"/><circle cx="830" cy="988" r="88"/><circle cx="65" cy="895" r="85"/><circle cx="1075" cy="803" r="8"/><circle cx="1072" cy="898" r="8"/><circle cx="1075" cy="393" r="15"/>
    </g>
    <g transform="translate(0 1230) scale(.33333)">
      <path d="M0 15L45 20L38 70L0 75M15 75L0 120M130 55L135 0M160 50L280 40Q290 30 285 20L215 0M135 50L215 0M140 95L170 92M150 60L245 50M150 130L260 115M145 168L280 150M178 80L225 70L230 130L182 135ZM298 190L345 130M298 190H345M385 28L420 0L430 28M520 28L540 0M615 28Q640 0 690 28M735 5L725 28M790 28Q850 -20 915 20M1020 0L1035 28M140 205Q165 200 168 210L165 230L158 240L165 255L155 265L162 275M140 205L122 275Q80 285 82 320L90 345Q130 375 165 355Q180 320 172 290L158 275M112 330Q130 320 132 335Q130 350 115 345ZM120 345L85 385M115 340L75 378M0 380Q60 365 80 400Q75 480 60 530Q50 590 0 600M75 378Q100 410 90 450Q90 520 50 580Q30 610 0 608M0 440L10 435M15 440Q20 450 30 445M0 490L15 520L0 525M10 490L0 500M195 382L270 470L250 465L265 500L290 520L295 538M195 382L158 485L170 490L145 535M180 485Q190 505 200 485M210 538L225 525L235 538M245 535L260 528M345 325Q290 370 300 420Q320 450 345 460M310 345Q310 380 345 395M298 390Q320 400 345 400M345 460L350 520L415 500L405 485M360 490L380 515M345 325L330 350M525 538Q530 480 580 488L670 538M670 487L690 487M810 487L830 538M850 487L860 538M935 538L1020 487M970 538L1060 487M1000 538L1080 500M1020 525L1080 538M0 710Q20 705 40 708M0 730L15 750L25 720M60 775Q70 800 85 805Q100 800 110 820L100 845M55 840Q65 810 90 815M70 845L80 825L90 845M130 820Q160 850 175 845L210 820M300 820L310 845M370 845L372 825Q400 820 420 835L440 820M460 820Q500 845 550 820M655 820V845M812 820V845M865 820Q895 840 925 820M945 845L1000 820V845M1045 845V825L1080 820"/>
      <circle cx="90" cy="25" r="18"/><circle cx="130" cy="75" r="19"/><circle cx="136" cy="113" r="19"/><circle cx="142" cy="151" r="19"/><circle cx="266" cy="58" r="19"/><circle cx="272" cy="96" r="19"/><circle cx="278" cy="134" r="19"/><circle cx="62" cy="134" r="12"/><circle cx="2" cy="186" r="10"/><circle cx="71" cy="215" r="18"/><circle cx="38" cy="302" r="25"/><circle cx="253" cy="238" r="18"/><circle cx="234" cy="334" r="25"/><circle cx="261" cy="405" r="12"/><circle cx="131" cy="426" r="12"/><circle cx="336" cy="36" r="12"/><circle cx="748" cy="519" r="12"/><circle cx="602" cy="825" r="12"/><circle cx="0" cy="810" r="9"/>
    </g>
    <g transform="translate(356 1230) scale(.33333)">
      <path d="M10 28Q80 -10 110 28M285 28L320 0M400 0L395 28M460 0L462 28M488 8H508V25H488ZM530 3H550V22H530ZM612 0H632V18H612ZM650 0H670V12H650ZM770 0Q830 50 895 0M980 0H1080M980 28L1080 35M985 148L1065 153L1080 110M1008 232L1040 222L1048 262L1070 265L1045 310L1035 285L1020 278ZM1080 395Q970 470 962 530Q970 600 1080 600M1080 470Q1060 450 1070 420M1000 480Q1020 455 1040 465M1035 485Q1060 480 1065 500Q1055 510 1040 500M1025 540Q1040 550 1055 542M1000 490L1005 470M0 487L20 510L40 487M80 487Q100 515 125 487M150 538Q150 500 180 487M225 487L205 538M285 487L250 538L270 510L240 515M320 487L300 538M380 490L395 500L410 490M460 487L468 538M492 515L570 502M580 538Q590 490 640 487M640 510L720 495M730 487L738 575L690 585M780 490Q820 510 800 550Q780 560 740 560M755 500L775 500M848 487L855 530M885 487L890 520M1055 700L1080 740M1040 740L1080 760M1020 775L1080 815M0 820L20 845M70 820Q80 845 110 845L180 820M120 845L125 825L150 820M305 820Q310 845 340 845M345 825L360 835M370 825Q410 820 415 845M545 845Q580 825 600 820M665 820Q670 810 710 825Q760 800 800 820Q810 840 800 845M690 830Q720 840 735 845M940 845L975 790L1080 830M960 845L985 805L1060 845"/>
      <circle cx="1008" cy="187" r="11"/><circle cx="1078" cy="187" r="11"/><circle cx="1024" cy="371" r="18"/><circle cx="1038" cy="512" r="48"/><circle cx="750" cy="706" r="12"/><circle cx="461" cy="833" r="12"/><circle cx="854" cy="833" r="12"/><circle cx="605" cy="818" r="12"/><circle cx="38" cy="8" r="12"/><circle cx="182" cy="0" r="10"/><circle cx="1035" cy="740" r="10"/>
    </g>
  </svg>

  <div class="log">
    <div class="day first">Sunday</div>
    <div class="msg out wide tail">
      <p class="text">Mam 250 delivery charges bhi add hongi<br>technical issue ki waja kuch products me<br>during checkout add nahi hote hain but<br>hamne website par mentioned kiye hain</p>
      <span class="meta">11:14 pm <svg class="ticks"><use href="#ticks"/></svg></span>
    </div>
    <div class="msg in short tail"><p class="text">Ok</p><span class="meta">11:33 pm</span></div>
    <div class="day">Today</div>
    <div class="msg out short tail"><p class="text">Mam apko parcel mil gaya?</p><span class="meta">11:16 pm <svg class="ticks"><use href="#ticks"/></svg></span></div>
    <div class="msg in short tail"><p class="text">Gee thanku</p><span class="meta">11:23 pm</span></div>
    <div class="msg out wide quoting tail">
      <blockquote class="quote"><cite>Humaira hussain.jaansreloved</cite><p>Gee thanku</p></blockquote>
      <p class="text">Great...mam kindly agar aap review deden</p>
      <span class="meta">11:23 pm <svg class="ticks"><use href="#ticks"/></svg></span>
    </div>
    <div class="msg out short follow"><p class="text">Product ki</p><span class="meta">11:24 pm <svg class="ticks"><use href="#ticks"/></svg></span></div>
    <div class="msg in short tail reacted">
      <p class="text">It was good <svg class="emoji" role="img" aria-label="Thumbs up" viewBox="0 0 120 130"><defs><linearGradient id="skin" x1="0" y1="0" x2="0" y2="1"><stop offset="0" stop-color="#dc9a72"/><stop offset="1" stop-color="#c8845c"/></linearGradient></defs><path fill="url(#skin)" d="M2 66Q20 62 35 52Q52 35 56 20Q56 2 63 2Q76 4 75 24Q74 38 70 50H106Q118 52 117 62Q116 68 112 70Q120 74 118 84Q116 90 110 92Q117 97 114 105Q112 110 106 111Q109 124 98 126H58Q48 127 38 122Q20 120 3 116Z"/><path d="M78 52Q66 54 68 64Q70 71 80 71H112M80 71Q69 73 71 82Q73 91 82 91H110M82 91Q72 94 74 102Q77 110 84 110H106M84 110Q74 114 76 126" fill="none" stroke="#8f4a2b" stroke-width="3"/></svg></p>
      <span class="meta">11:24 pm</span>
      <span class="reaction"><svg role="img" aria-label="Sparkles" width="34" height="36" viewBox="0 0 102 108"><g fill="#ffd84a"><path d="M68 16Q72 48 102 54Q72 60 67 92Q63 60 34 54Q63 48 68 16Z"/><path d="M34 4Q37 18 51 21Q37 25 34 39Q31 25 18 21Q31 18 34 4Z"/><path d="M25 54Q29 74 48 78Q29 82 25 104Q22 82 2 78Q22 74 25 54Z"/></g><path fill="#fff3bb" d="M67 34Q70 50 84 54Q70 57 67 72Q64 57 52 54Q64 50 67 34ZM25 66Q28 76 37 78Q28 80 25 92Q23 80 14 78Q23 76 25 66Z"/></svg></span>
    </div>
    <div class="msg out wide tail">
      <p class="text">Thank you so much for such a great reply<br>mam hope you shop again from us<svg class="emoji" role="img" aria-label="Glowing star" viewBox="0 0 132 132"><defs><linearGradient id="gold" x1="0" y1="0" x2="0" y2="1"><stop offset="0" stop-color="#f9b233"/><stop offset=".35" stop-color="#fff08a"/><stop offset=".65" stop-color="#fdd023"/><stop offset="1" stop-color="#f08c1d"/></linearGradient></defs><path fill="url(#gold)" stroke="#f0a030" stroke-width="3" stroke-linejoin="round" d="M66 2L84 42L130 46L97 76L108 126L66 103L24 126L34 76L2 46L48 42Z"/><path fill="#fff3b0" d="M66 12L77 44Q66 60 54 44Z"/><g fill="#d4bc6a"><path d="M25 17L40 14L37 32Z"/><path d="M92 14L108 17L95 32Z"/><path d="M7 82L24 84L10 98Z"/><path d="M110 84L127 82L122 98Z"/><path d="M66 115L74 131H58Z"/></g></svg></p>
      <span class="meta">11:24 pm <svg class="ticks"><use href="#ticks"/></svg></span>
    </div>
  </div>

  <form class="composer">
    <div class="field">
      <button type="button" class="icon-btn" aria-label="Stickers"><svg width="40" height="40" viewBox="0 0 40 40" fill="none" stroke="#8d9599" stroke-width="4"><path d="M20 38H17Q2 38 2 23V17Q2 2 17 2H23Q38 2 38 17V20Q38 23 35 26L26 35Q23 38 20 38ZM22 38V31Q22 22 31 22H38"/><circle cx="13" cy="14" r="3.200" fill="#8d9599" stroke="none"/><circle cx="27" cy="14" r="3.200" fill="#8d9599" stroke="none"/><path d="M11 23H28L22 28Q13 29 11 23Z" fill="#8d9599" stroke="none"/></svg></button>
      <input class="entry" type="text" placeholder="Message" aria-label="Message">
      <button type="button" class="icon-btn" aria-label="Attach"><svg width="26" height="40" viewBox="0 0 26 40" fill="none" stroke="#8d9599" stroke-width="3.400"><path d="M24 9V26Q24 38 13 38Q2 38 2 26V10Q2 2 9.500 2Q17.500 2 17.500 10V26Q17.500 31 13 31Q9 31 9 26V9"/></svg></button>
      <button type="button" class="icon-btn" aria-label="Camera"><svg width="40" height="36" viewBox="0 0 40 36" fill="none" stroke="#8d9599" stroke-width="4"><path d="M4 6H12L16 2H25L29 6H36Q38 6 38 8V32Q38 34 36 34H4Q2 34 2 32V8Q2 6 4 6Z" stroke-linejoin="round"/><circle cx="20" cy="20" r="7"/></svg></button>
    </div>
    <button type="button" class="mic" aria-label="Record voice message"><svg width="28" height="38" viewBox="0 0 28 38"><rect x="8" y="0" width="12" height="24" rx="6" fill="#06140c"/><path d="M2 18Q2 30 14 30Q26 30 26 18M14 30V38" fill="none" stroke="#06140c" stroke-width="3.800"/></svg></button>
  </form>
</main>

<nav class="sysnav">
  <button class="icon-btn" aria-label="Recent apps"><svg width="24" height="24" viewBox="0 0 24 24" stroke="#77797b" stroke-width="2"><path d="M0 1H24M0 12H24M0 23H24"/></svg></button>
  <button class="icon-btn" aria-label="Home"><svg width="24" height="24" viewBox="0 0 24 24" fill="none" stroke="#77797b" stroke-width="1.600"><rect x="1" y="1" width="22" height="22" rx="5"/></svg></button>
  <button class="icon-btn" aria-label="System back"><svg width="24" height="24" viewBox="0 0 24 24" fill="none" stroke="#77797b" stroke-width="1.600" stroke-linejoin="round"><path d="M2 11Q0 12 2 13L20 22.500Q22 23 22.500 21V3Q22 1 20 1.500Z"/></svg></button>
</nav>
</body>
</html>
```

FILE: styles.css
```css
* { box-sizing: border-box; }

body {
  margin: 0;
  min-height: 100vh;
  display: flex;
  flex-direction: column;
  background: #0a0f13;
  color: #e4f0ea;
  font-family: Lato, "Open Sans", sans-serif;
  font-weight: 300;
}

p, h1, blockquote { margin: 0; }
svg { display: block; flex: none; }
.defs { position: absolute; width: 0; height: 0; }

.icon-btn {
  display: flex;
  flex: none;
  padding: 0;
  border: 0;
  background: none;
}

/* Header */
.top { border-bottom: 1px solid #192025; }

.status {
  display: flex;
  justify-content: space-between;
  align-items: center;
  height: 92px;
  padding: 0 53px 0 113px;
}

.clock {
  color: #fff;
  font: 500 24px/32px "Noto Sans", sans-serif;
}

.status-icons { display: flex; align-items: center; gap: 10px; }
.power { display: flex; gap: 5px; }
.charge { fill: #f3e6c0; font: 500 14px "Noto Sans", sans-serif; }

.volte {
  display: flex;
  flex-direction: column;
  width: 23px;
  color: #dcdde0;
  font: 700 10px/10px Roboto, sans-serif;
}

.appbar {
  position: relative;
  display: flex;
  align-items: center;
  height: 90px;
  padding: 0 39px 16px 32px;
}

.avatar {
  flex: none;
  width: 70px;
  height: 70px;
  margin-left: 40px;
  border-radius: 50%;
  background: #10362a;
}

.contact {
  flex: 1;
  padding-left: 232px;
  overflow: hidden;
  white-space: nowrap;
  color: #fff;
  font-size: 28px;
  font-weight: 300;
  line-height: 40px;
}

.actions { display: flex; align-items: center; gap: 59px; }

.scribble {
  position: absolute;
  z-index: 2;
  top: -92px;
  left: 0;
  pointer-events: none;
}

/* Conversation */
.chat {
  position: relative;
  flex: 1;
  display: flex;
  flex-direction: column;
  justify-content: space-between;
}

.wallpaper {
  position: absolute;
  inset: 0;
  width: 100%;
  height: 100%;
  fill: none;
  stroke: #242b2f;
  stroke-width: 5;
  stroke-linecap: round;
  stroke-linejoin: round;
}

.log {
  position: relative;
  display: flex;
  flex-direction: column;
  gap: 21px;
  padding: 0 34px;
}

.day {
  align-self: center;
  padding: 9px 18px;
  border-radius: 16px;
  background: #11181c;
  color: #7f878b;
  font-size: 22px;
  line-height: 33px;
}

.day.first { padding-top: 0; border-radius: 0 0 16px 16px; }

.msg {
  position: relative;
  display: flex;
  border-radius: 20px;
}

.out { align-self: flex-end; background: #144d37; --bubble: #144d37; }
.in { align-self: flex-start; background: #1f272a; --bubble: #1f272a; }

.wide {
  flex-direction: column;
  align-self: stretch;
  margin-left: 79px;
  padding: 12px 18px 8px 20px;
}

.short { padding: 12px 18px 14px 20px; }
.short.out { gap: 21px; }
.short.in { gap: 32px; }

.out.tail { border-top-right-radius: 0; }
.in.tail { border-top-left-radius: 0; }

.tail::after {
  content: "";
  position: absolute;
  top: 0;
  width: 15px;
  height: 18px;
  background: var(--bubble);
  clip-path: path("M0 0H11Q16 2 13 6L2 17H0Z");
}

.out.tail::after { left: 100%; }
.in.tail::after { right: 100%; transform: scaleX(-1); }

.text {
  font-size: 28px;
  line-height: 38px;
  white-space: nowrap;
}

.meta {
  display: flex;
  align-items: center;
  gap: 8px;
  color: #8fb0a2;
  font-size: 21px;
  line-height: 26px;
  white-space: nowrap;
}

.in .meta { color: #858d90; }
.wide .meta { align-self: flex-end; margin-top: 13px; }
.short .meta { align-self: flex-end; margin-bottom: -7px; }
.ticks { width: 32px; height: 21px; color: #a3bfb3; }

.quoting { margin-left: 86px; padding: 8px 18px 8px 20px; }

.quote {
  position: relative;
  overflow: hidden;
  margin: 0 -10px 13px -12px;
  padding: 11px 16px 9px 24px;
  border-radius: 14px;
  background: #154233;
  color: #8caf9f;
  font-size: 25px;
  line-height: 37px;
}

.quote::before {
  content: "";
  position: absolute;
  inset: 0 auto 0 0;
  width: 8px;
  background: #a391ff;
}

.quote cite { display: block; color: #b9cfe0; font-style: normal; }

.follow { margin-top: -15px; }
.reacted { margin-bottom: 42px; }

.emoji {
  display: inline-block;
  width: 44px;
  height: 44px;
  margin: 5px 0;
  vertical-align: -16px;
}

.reaction {
  position: absolute;
  top: calc(100% - 12px);
  left: 14px;
  display: flex;
  align-items: center;
  justify-content: center;
  width: 64px;
  height: 58px;
  border: 3px solid #0b1215;
  border-radius: 29px;
  background: #1f272a;
}

/* Composer */
.composer {
  position: relative;
  display: flex;
  align-items: center;
  gap: 10px;
  padding: 12px 11px 9px 10px;
}

.field {
  flex: 1;
  min-width: 0;
  display: flex;
  align-items: center;
  height: 93px;
  padding: 0 26px;
  border-radius: 47px;
  background: #1f272a;
}

.entry {
  flex: 1;
  min-width: 0;
  margin-left: 28px;
  padding: 6px 0 0;
  border: 0;
  outline: 0;
  background: none;
  color: #e4f0ea;
  font: 300 32px/40px Lato, sans-serif;
}

.entry::placeholder { color: #7c8488; opacity: 1; }
.field .icon-btn:last-child { margin-left: 63px; }

.mic {
  display: flex;
  flex: none;
  align-items: center;
  justify-content: center;
  width: 95px;
  height: 95px;
  padding: 0;
  border: 0;
  border-radius: 50%;
  background: #22c064;
}

/* System navigation */
.sysnav {
  display: flex;
  justify-content: center;
  align-items: center;
  gap: 147px;
  height: 88px;
  padding-left: 4px;
  background: #000;
}
```
